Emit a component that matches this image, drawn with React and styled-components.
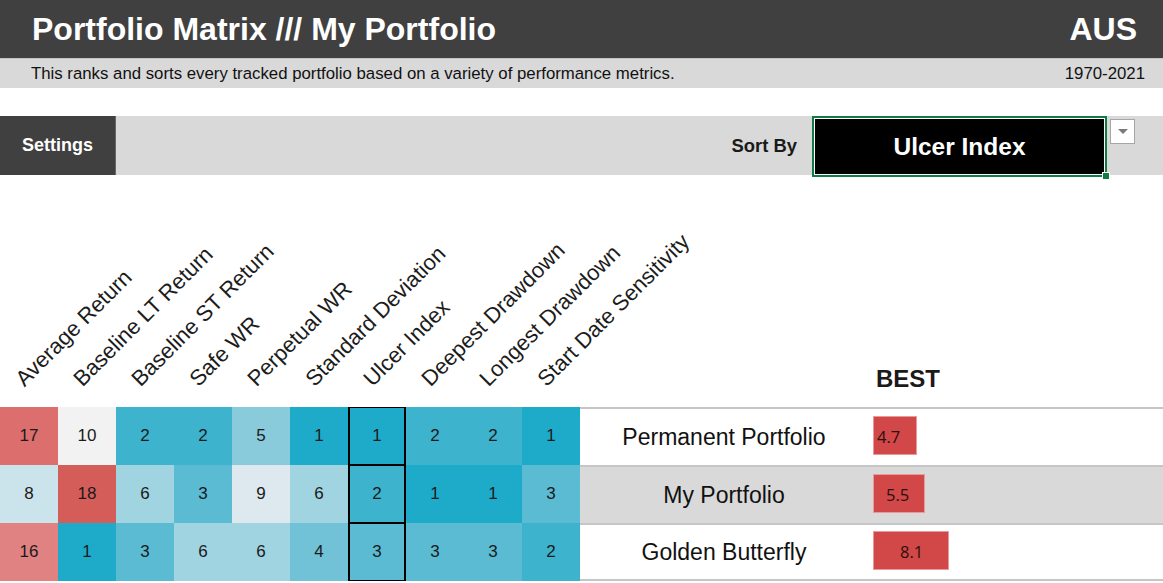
import React from "react";
import styled, { createGlobalStyle } from "styled-components";

const GlobalStyle = createGlobalStyle`
    body {
        margin: 0;
        background: #ffffff;
        font-family: "Liberation Sans", Arial, sans-serif;
        color: #1a1a1a;
    }
`;

const Page = styled.div`
    width: 1163px;
    overflow: hidden;
`;

const TitleBar = styled.div`
    height: 58px;
    background-color: #404040;
    display: flex;
    align-items: center;
    justify-content: space-between;
    padding: 0 26px 0 32px;
    color: #ffffff;
    font-weight: 700;
    font-size: 32px;
`;

const SubBar = styled.div`
    height: 30px;
    background-color: #d9d9d9;
    display: flex;
    align-items: center;
    justify-content: space-between;
    padding: 0 18px 0 31px;
    font-size: 16.8px;
    color: #111;
    border-top: 1px solid #c4c4c4;
    box-sizing: border-box;
`;

const Spacer = styled.div`
    height: 28px;
`;

const SettingsBar = styled.div`
    height: 59px;
    background-color: #d9d9d9;
    display: flex;
    align-items: flex-start;
`;

const SettingsButton = styled.div`
    width: 115px;
    height: 59px;
    background-color: #404040;
    color: #ffffff;
    font-weight: 700;
    font-size: 18px;
    display: flex;
    align-items: center;
    justify-content: center;
    border-right: 1px solid #666;
`;

const SortLabel = styled.div`
    margin-left: auto;
    height: 59px;
    display: flex;
    align-items: center;
    font-weight: 700;
    font-size: 18.4px;
    margin-right: 15px;
`;

const SortBox = styled.div`
    position: relative;
    width: 295px;
    height: 61px;
    box-sizing: border-box;
    border: 2px solid #107c41;
    background-color: #ffffff;
    padding: 1px;
`;

const SortValue = styled.div`
    height: 100%;
    background-color: #000000;
    color: #ffffff;
    font-weight: 700;
    font-size: 24.5px;
    display: flex;
    align-items: center;
    justify-content: center;
`;

const Handle = styled.div`
    position: absolute;
    right: -5px;
    bottom: -5px;
    width: 6px;
    height: 6px;
    background-color: #107c41;
    border: 1px solid #ffffff;
`;

const DropButton = styled.div`
    width: 23px;
    height: 23px;
    margin: 3px 0 0 3px;
    background-color: #ffffff;
    border: 1px solid #a6a6a6;
    display: flex;
    align-items: center;
    justify-content: center;

    &::after {
        content: "";
        border-left: 5px solid transparent;
        border-right: 5px solid transparent;
        border-top: 5px solid #7a7a7a;
    }
`;

const Matrix = styled.div`
    display: grid;
    grid-template-columns: repeat(10, 58px) 288px 1fr;
    grid-template-rows: 232px repeat(3, 58px);
`;

const HeadCell = styled.div`
    display: flex;
    align-items: flex-end;
    padding: 0 0 16px 28px;
`;

const HeadLabel = styled.span`
    display: block;
    white-space: nowrap;
    font-size: 22px;
    line-height: 24px;
    color: #1c1c1c;
    transform: rotate(-45deg);
    transform-origin: 0 100%;
`;

const BestLabel = styled.div`
    display: flex;
    align-items: flex-end;
    padding: 0 0 14px 8px;
    font-weight: 700;
    font-size: 24px;
`;

const Cell = styled.div`
    background-color: ${(p) => p.$bg};
    display: flex;
    align-items: center;
    justify-content: center;
    font-size: 17px;
    color: #1a1a1a;
    box-shadow: ${(p) =>
        p.$marked
            ? "inset 2px 0 #000, inset -2px 0 #000, inset 0 1px #000, inset 0 -1px #000"
            : "none"};
`;

const NameCell = styled.div`
    background-color: ${(p) => (p.$shaded ? "#d9d9d9" : "#ffffff")};
    border-top: 2px solid #c6c6c6;
    border-bottom: ${(p) => (p.$last ? "2px solid #c6c6c6" : "none")};
    display: flex;
    align-items: center;
    justify-content: center;
    font-size: 23px;
    color: #111;
`;

const BarCell = styled.div`
    background-color: ${(p) => (p.$shaded ? "#d9d9d9" : "#ffffff")};
    border-top: 2px solid #c6c6c6;
    border-bottom: ${(p) => (p.$last ? "2px solid #c6c6c6" : "none")};
    display: flex;
    align-items: center;
    padding-left: 5px;
`;

const Bar = styled.div`
    height: 39px;
    margin-top: -3px;
    background-color: #d24747;
    border: 1px solid #ea9a9a;
    box-sizing: border-box;
    display: flex;
    align-items: center;
    font-family: "Open Sans", "Liberation Sans", sans-serif;
    font-size: 16.5px;
    color: #2a1010;
    padding-top: 2px;
`;

const metrics = [
    "Average Return",
    "Baseline LT Return",
    "Baseline ST Return",
    "Safe WR",
    "Perpetual WR",
    "Standard Deviation",
    "Ulcer Index",
    "Deepest Drawdown",
    "Longest Drawdown",
    "Start Date Sensitivity",
];

const colors = {
    1: "#1eabc9",
    2: "#3db3cd",
    3: "#5abbd3",
    4: "#72c2d7",
    5: "#89cbdb",
    6: "#a0d4e0",
    8: "#cbe3ea",
    9: "#dde9ee",
    10: "#f2f2f2",
    16: "#e08282",
    17: "#dc6e6e",
    18: "#d45d5a",
};

const rows = [
    { name: "Permanent Portfolio", ranks: [17, 10, 2, 2, 5, 1, 1, 2, 2, 1], best: "4.7", width: 44, pad: 3 },
    { name: "My Portfolio", ranks: [8, 18, 6, 3, 9, 6, 2, 1, 1, 3], best: "5.5", width: 52, pad: 12 },
    { name: "Golden Butterfly", ranks: [16, 1, 3, 6, 6, 4, 3, 3, 3, 2], best: "8.1", width: 76, pad: 26 },
];

const SORTED = 6;

const App = () => {
    return (
        <Page>
            <GlobalStyle />
            <TitleBar>
                <span>Portfolio Matrix /// My Portfolio</span>
                <span>AUS</span>
            </TitleBar>
            <SubBar>
                <span>This ranks and sorts every tracked portfolio based on a variety of performance metrics.</span>
                <span>1970-2021</span>
            </SubBar>
            <Spacer />
            <SettingsBar>
                <SettingsButton>Settings</SettingsButton>
                <SortLabel>Sort By</SortLabel>
                <SortBox>
                    <SortValue>Ulcer Index</SortValue>
                    <Handle />
                </SortBox>
                <DropButton />
                <div style={{ width: 28 }} />
            </SettingsBar>
            <Matrix>
                {metrics.map((m) => (
                    <HeadCell key={m}>
                        <HeadLabel>{m}</HeadLabel>
                    </HeadCell>
                ))}
                <div />
                <BestLabel>BEST</BestLabel>
                {rows.map((r, i) => (
                    <React.Fragment key={r.name}>
                        {r.ranks.map((v, j) => (
                            <Cell key={j} $bg={colors[v]} $marked={j === SORTED}>
                                {v}
                            </Cell>
                        ))}
                        <NameCell $shaded={i === 1} $last={i === rows.length - 1}>
                            {r.name}
                        </NameCell>
                        <BarCell $shaded={i === 1} $last={i === rows.length - 1}>
                            <Bar style={{ width: r.width, paddingLeft: r.pad }}>{r.best}</Bar>
                        </BarCell>
                    </React.Fragment>
                ))}
            </Matrix>
        </Page>
    );
};

export default App;
